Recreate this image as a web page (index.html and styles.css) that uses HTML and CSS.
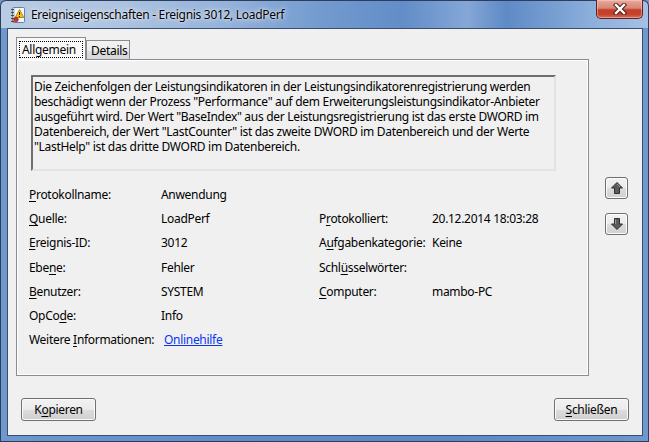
FILE: index.html
```html
<!DOCTYPE html>
<html lang="de">
<head>
    <meta charset="UTF-8">
    <meta name="viewport" content="width=device-width, initial-scale=1.0">
    <title>Ereigniseigenschaften</title>
    <link rel="stylesheet" href="styles.css">
</head>
<body>
    <div class="window">
        <div class="titlebar">
            <svg class="app-icon" width="16" height="16" viewBox="0 0 16 16">
                <rect x="2.5" y="0.5" width="12" height="15" rx="1" fill="#f2f5f9" stroke="#6f7f96"/>
                <rect x="3" y="1" width="2" height="14" fill="#c9d3e0"/>
                <rect x="1" y="2" width="3" height="1" fill="#4a4a4a"/>
                <rect x="1" y="5" width="3" height="1" fill="#4a4a4a"/>
                <rect x="1" y="8" width="3" height="1" fill="#4a4a4a"/>
                <rect x="1" y="11" width="3" height="1" fill="#4a4a4a"/>
                <rect x="1" y="14" width="3" height="1" fill="#4a4a4a"/>
                <path d="M9.5 2.5 L13.8 10.5 H5.2 Z" fill="#f7c600" stroke="#9c7400" stroke-width="0.8"/>
                <rect x="9" y="5" width="1" height="3" fill="#222"/>
                <rect x="9" y="9" width="1" height="1" fill="#222"/>
                <circle cx="6" cy="12.5" r="2.3" fill="#d92a2a" stroke="#8e1515" stroke-width="0.6"/>
            </svg>
            <span class="title">Ereigniseigenschaften - Ereignis 3012, LoadPerf</span>
            <div class="close">
                <svg width="14" height="12" viewBox="0 0 14 12">
                    <path d="M3 2 L11 10 M11 2 L3 10" stroke="#4a1d16" stroke-width="4.4" stroke-linecap="square"/>
                    <path d="M3 2 L11 10 M11 2 L3 10" stroke="#ffffff" stroke-width="2.4" stroke-linecap="square"/>
                </svg>
            </div>
        </div>

        <div class="client">
            <div class="tabs">
                <div class="tab active"><span class="focus">Allgemein</span></div>
                <div class="tab">Details</div>
            </div>

            <div class="main">
                <div class="panel">
                    <div class="desc">Die Zeichenfolgen der Leistungsindikatoren in der Leistungsindikatorenregistrierung werden beschädigt wenn der Prozess "Performance" auf dem Erweiterungsleistungsindikator-Anbieter ausgeführt wird. Der Wert "BaseIndex" aus der Leistungsregistrierung ist das erste DWORD im Datenbereich, der Wert "LastCounter" ist das zweite DWORD im Datenbereich und der Werte "LastHelp" ist das dritte DWORD im Datenbereich.</div>

                    <div class="fields">
                        <span class="label"><u>P</u>rotokollname:</span>
                        <span class="value">Anwendung</span>
                        <span></span>
                        <span></span>

                        <span class="label"><u>Q</u>uelle:</span>
                        <span class="value">LoadPerf</span>
                        <span class="label">P<u>r</u>otokolliert:</span>
                        <span class="value">20.12.2014 18:03:28</span>

                        <span class="label"><u>E</u>reignis-ID:</span>
                        <span class="value">3012</span>
                        <span class="label">A<u>u</u>fgabenkategorie:</span>
                        <span class="value">Keine</span>

                        <span class="label">Ebe<u>n</u>e:</span>
                        <span class="value">Fehler</span>
                        <span class="label">Schl<u>ü</u>sselwörter:</span>
                        <span class="value"></span>

                        <span class="label"><u>B</u>enutzer:</span>
                        <span class="value">SYSTEM</span>
                        <span class="label"><u>C</u>omputer:</span>
                        <span class="value">mambo-PC</span>

                        <span class="label">OpCo<u>d</u>e:</span>
                        <span class="value">Info</span>
                        <span></span>
                        <span></span>

                        <span class="label">Weitere <u>I</u>nformationen:</span>
                        <span class="value"><a class="link" href="#">Onlinehilfe</a></span>
                        <span></span>
                        <span></span>
                    </div>
                </div>

                <div class="nav">
                    <div class="nav-btn">
                        <svg width="14" height="14" viewBox="0 0 14 14">
                            <path d="M7 1.5 L12.5 7 H9.5 V12.5 H4.5 V7 H1.5 Z" fill="#5c5c5c" stroke="#2e2e2e" stroke-width="1" stroke-linejoin="round"/>
                            <path d="M7 3 L10 6" stroke="#9a9a9a" stroke-width="1"/>
                        </svg>
                    </div>
                    <div class="nav-btn">
                        <svg width="14" height="14" viewBox="0 0 14 14">
                            <path d="M7 12.5 L12.5 7 H9.5 V1.5 H4.5 V7 H1.5 Z" fill="#5c5c5c" stroke="#2e2e2e" stroke-width="1" stroke-linejoin="round"/>
                            <path d="M5.5 2.5 V7" stroke="#9a9a9a" stroke-width="1"/>
                        </svg>
                    </div>
                </div>
            </div>

            <div class="footer">
                <div class="btn">K<u>o</u>pieren</div>
                <div class="btn"><u>S</u>chließen</div>
            </div>
        </div>
    </div>
</body>
</html>
```

FILE: styles.css
```css
body {
    margin: 0;
    font-family: 'Noto Sans', 'Open Sans', sans-serif;
    font-size: 12px;
    letter-spacing: -0.3px;
    color: #000;
    background: #6f96cc;
}

.window {
    width: 649px;
    height: 442px;
    box-sizing: border-box;
    padding: 0 6px 6px 7px;
    border-radius: 6px 6px 0 0;
    background: linear-gradient(to right, #6e98cf 0%, #5f8bc7 40%, #5d89c5 70%, #6f98cf 100%);
    box-shadow: inset 0 0 0 1px #2b3f5c;
    display: flex;
    flex-direction: column;
    overflow: hidden;
}

.titlebar {
    height: 28px;
    margin: 0 -6px 0 -7px;
    display: flex;
    align-items: center;
    background: linear-gradient(to right, #b9cce4 0%, #adc3e0 18%, #94b2da 35%, #729ace 50%, #628dc8 62%, #84a7d6 72%, #5e8ac6 78%, #8fb1dc 92%, #a6c0e2 100%);
    border-radius: 6px 6px 0 0;
    box-shadow: inset 0 1px 0 #2b3f5c, inset 1px 0 0 #2b3f5c, inset -1px 0 0 #2b3f5c;
    position: relative;
}

.app-icon {
    margin-left: 10px;
    margin-top: 1px;
}

.title {
    margin-left: 5px;
    margin-top: 1px;
    font-size: 12px;
    color: #000;
    text-shadow: 0 0 6px rgba(255, 255, 255, 0.9), 0 0 2px rgba(255, 255, 255, 0.8);
}

.close {
    position: absolute;
    top: 0;
    right: 6px;
    width: 47px;
    height: 19px;
    box-sizing: border-box;
    border: 1px solid #5a2320;
    border-top: none;
    border-radius: 0 0 5px 5px;
    background: linear-gradient(to bottom, #e9aa9f 0%, #d98574 45%, #c2402a 55%, #c6412c 80%, #d6705c 100%);
    box-shadow: inset 0 0 0 1px rgba(255, 220, 210, 0.45);
    display: flex;
    align-items: center;
    justify-content: center;
}

.client {
    height: 408px;
    box-sizing: border-box;
    border: 1px solid #3a4f6c;
    background: #f0f0f0;
    padding-top: 8px;
    display: flex;
    flex-direction: column;
}

.tabs {
    display: flex;
    align-items: flex-end;
    height: 23px;
    margin-left: 8px;
}

.tab {
    box-sizing: border-box;
    height: 20px;
    width: 44px;
    padding: 1px 0 0 4px;
    border: 1px solid #898c95;
    border-bottom: none;
    background: linear-gradient(to bottom, #f3f3f3 0%, #ebebeb 50%, #dddddd 51%, #d7d7d7 100%);
    line-height: 17px;
}

.tab.active {
    position: relative;
    z-index: 1;
    height: 23px;
    width: 70px;
    padding: 3px 2px 0 2px;
    background: #f9f9f9;
}

.focus {
    display: block;
    border: 1px dotted #000;
    padding: 0 2px;
    line-height: 15px;
}

.main {
    display: flex;
    margin-left: 8px;
    margin-top: -1px;
}

.panel {
    width: 573px;
    height: 317px;
    box-sizing: border-box;
    border: 1px solid #898c95;
    background: #f0f0f0;
    box-shadow: inset 0 0 0 1px #ffffff;
    padding: 15px 0 0 14px;
}

.desc {
    width: 525px;
    height: 96px;
    box-sizing: border-box;
    border: 2px solid;
    border-color: #6e6e6e #e3e3e3 #e3e3e3 #6e6e6e;
    padding: 2px 2px 0 1px;
    line-height: 15px;
}

.fields {
    display: grid;
    grid-template-columns: 132px 158px 113px auto;
    grid-auto-rows: 24.3px;
    align-items: center;
    margin: 11px 0 0 -2px;
}

.label u,
.btn u {
    text-decoration: underline;
    text-underline-offset: 2px;
}

.link {
    color: #0a36f0;
    margin-left: 3px;
}

.nav {
    display: flex;
    flex-direction: column;
    gap: 14px;
    margin: 118px 0 0 16px;
}

.nav-btn,
.btn {
    box-sizing: border-box;
    border: 1px solid #707070;
    border-radius: 3px;
    background: linear-gradient(to bottom, #f2f2f2 0%, #ebebeb 50%, #dddddd 51%, #cfcfcf 100%);
    box-shadow: inset 0 0 0 1px #fbfbfb;
    display: flex;
    align-items: center;
    justify-content: center;
}

.nav-btn {
    width: 23px;
    height: 22px;
}

.footer {
    display: flex;
    justify-content: space-between;
    padding: 0 13px;
    margin-top: 22px;
}

.btn {
    width: 75px;
    height: 23px;
}
```
